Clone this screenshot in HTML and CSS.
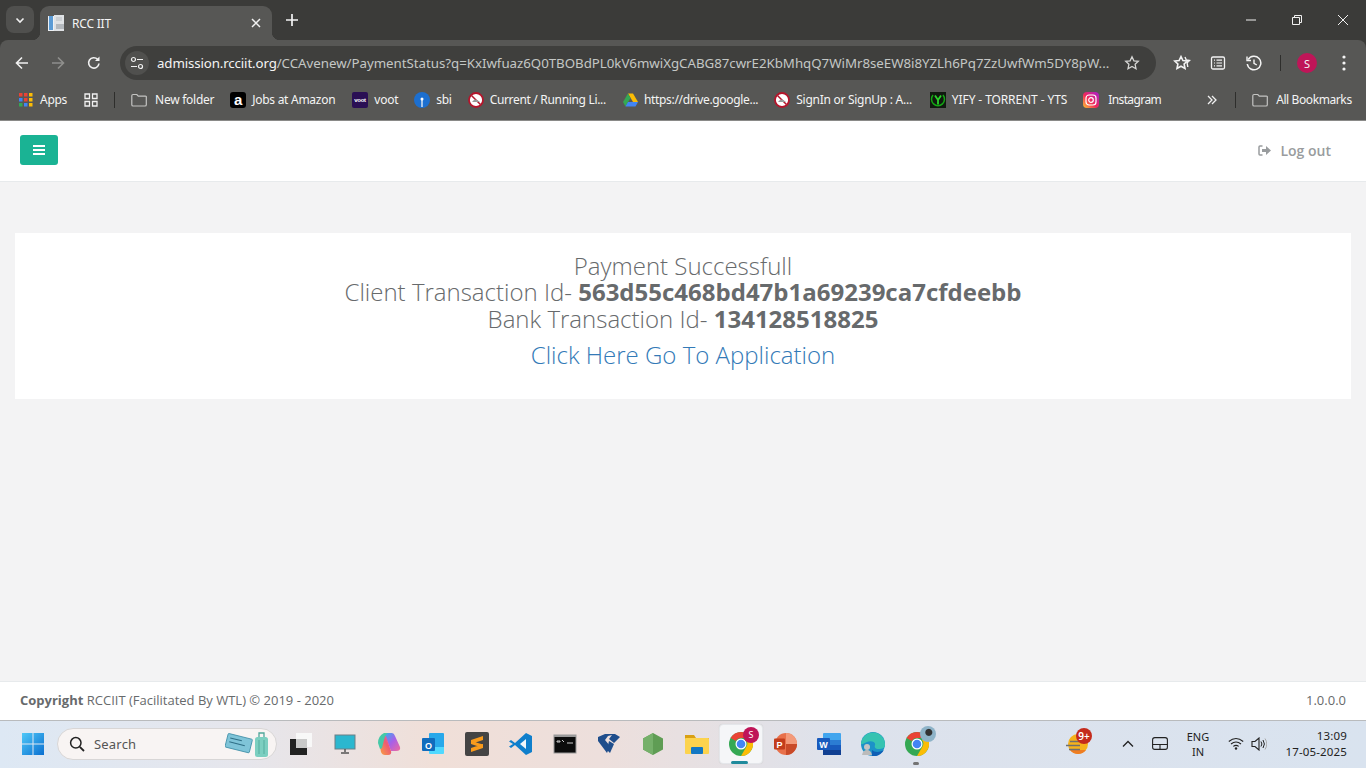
FILE: index.html
```html
<!DOCTYPE html>
<html lang="en">
<head>
<meta charset="utf-8">
<title>RCC IIT</title>
<link rel="stylesheet" href="styles.css">
</head>
<body>
<header class="browser">
  <div class="tabstrip">
    <div class="tab-search"><svg width="12" height="12" viewBox="0 0 12 12"><path d="M2.500 4.500 6 8l3.500-3.500" fill="none" stroke="#f1f1f1" stroke-width="1.600"/></svg></div>
    <div class="tab">
      <svg class="favicon" width="16" height="16" viewBox="0 0 16 16"><rect x="0" y="1" width="11" height="15" fill="#eef1f4"/><rect x="1" y="1" width="4" height="14" fill="#5b9bd5"/><rect x="6" y="0" width="10" height="16" fill="#dfe2e5"/><path d="M8 3h6M8 5h6" stroke="#b8bdc2"/><rect x="8" y="9" width="8" height="5" fill="#b4b9be"/></svg>
      <span class="tab-title">RCC IIT</span>
      <svg class="tab-close" width="12" height="12" viewBox="0 0 12 12"><path d="M2 2l8 8M10 2l-8 8" stroke="#f1f1f1" stroke-width="1.500"/></svg>
    </div>
    <svg class="new-tab" width="14" height="14" viewBox="0 0 14 14"><path d="M7 1v12M1 7h12" stroke="#f4f4f4" stroke-width="1.700"/></svg>
    <div class="win-controls">
      <svg width="12" height="12" viewBox="0 0 12 12"><path d="M1 6h10" stroke="#f1f1f1"/></svg>
      <svg width="12" height="12" viewBox="0 0 12 12"><path d="M1.500 3.500h7v7h-7zM3.500 3.500v-2h7v7h-2" fill="none" stroke="#f1f1f1"/></svg>
      <svg width="12" height="12" viewBox="0 0 12 12"><path d="M1 1l10 10M11 1 1 11" stroke="#f1f1f1"/></svg>
    </div>
  </div>
  <div class="toolbar">
    <svg class="tb-back" width="16" height="16" viewBox="0 0 16 16"><path d="M14 8H2.500M8 2.500 2.500 8 8 13.500" fill="none" stroke="#f1f1f1" stroke-width="1.600"/></svg>
    <svg class="tb-fwd" width="16" height="16" viewBox="0 0 16 16"><path d="M2 8h11.500M8 2.500 13.500 8 8 13.500" fill="none" stroke="#8f8f8d" stroke-width="1.600"/></svg>
    <svg class="tb-reload" width="16" height="16" viewBox="0 0 16 16"><path d="M13 8.500A5.200 5.200 0 1 1 11.600 4.300" fill="none" stroke="#f1f1f1" stroke-width="1.600"/><path d="M13.500 1.500v4.600H9z" fill="#f1f1f1"/></svg>
    <div class="omnibox">
      <div class="site-chip"><svg width="14" height="14" viewBox="0 0 14 14"><circle cx="3.500" cy="3.500" r="2" fill="none" stroke="#f1f1f1" stroke-width="1.200"/><path d="M7 3.500h6M1 10.500h6" stroke="#f1f1f1" stroke-width="1.200"/><circle cx="10.500" cy="10.500" r="2" fill="none" stroke="#f1f1f1" stroke-width="1.200"/></svg></div>
      <div class="url"><span class="url-host">admission.rcciit.org</span><span class="url-path">/CCAvenew/PaymentStatus?q=KxIwfuaz6Q0TBOBdPL0kV6mwiXgCABG87cwrE2KbMhqQ7WiMr8seEW8i8YZLh6Pq7ZzUwfWm5DY8pW...</span></div>
      <svg class="omni-star" width="16" height="16" viewBox="0 0 16 16"><path d="m8 1.800 1.900 4 4.400.5-3.200 3 .9 4.400L8 11.500l-4 2.200.9-4.400-3.200-3 4.400-.5z" fill="none" stroke="#d6d6d4" stroke-width="1.300"/></svg>
    </div>
    <svg class="tb-ico tb-stars" width="18" height="18" viewBox="0 0 18 18"><path d="m8 2.500 1.900 4 4.400.5-3.200 3 .9 4.400L8 12.200l-4 2.200.9-4.400L1.700 7l4.400-.5z" fill="none" stroke="#f4f4f4" stroke-width="1.600"/><path d="m12 3 1.300 3 3.200.5-2.400 2.300.7 4.200" fill="none" stroke="#f4f4f4" stroke-width="1.400"/></svg>
    <svg class="tb-ico tb-list" width="16" height="16" viewBox="0 0 16 16"><rect x="1.500" y="2" width="13" height="12" rx="1.500" fill="none" stroke="#f4f4f4" stroke-width="1.300"/><path d="M6.500 5.200h5.500M6.500 8h5.500M6.500 10.800h5.500M4 5.200h1M4 8h1M4 10.800h1" stroke="#f4f4f4" stroke-width="1.200"/></svg>
    <svg class="tb-ico tb-hist" width="16" height="16" viewBox="0 0 16 16"><path d="M2.200 4.500A6.800 6.800 0 1 1 1.300 9" fill="none" stroke="#f4f4f4" stroke-width="1.500"/><path d="M1 1.500v4h4" fill="none" stroke="#f4f4f4" stroke-width="1.400"/><path d="M8 4.500V8.300l2.800 1.700" fill="none" stroke="#f4f4f4" stroke-width="1.400"/></svg>
    <span class="tb-sep"></span>
    <span class="avatar">S</span>
    <svg class="tb-ico tb-more" width="4" height="16" viewBox="0 0 4 16"><circle cx="2" cy="2" r="1.600" fill="#f4f4f4"/><circle cx="2" cy="8" r="1.600" fill="#f4f4f4"/><circle cx="2" cy="14" r="1.600" fill="#f4f4f4"/></svg>
  </div>
  <nav class="bookmarks">
    <a class="bm bm-apps"><svg width="14" height="14" viewBox="0 0 14 14"><g><rect x="0" y="0" width="3.500" height="3.500" fill="#ea4335"/><rect x="5" y="0" width="3.500" height="3.500" fill="#ea4335"/><rect x="10" y="0" width="3.500" height="3.500" fill="#fbbc05"/><rect x="0" y="5" width="3.500" height="3.500" fill="#4285f4"/><rect x="5" y="5" width="3.500" height="3.500" fill="#ea4335"/><rect x="10" y="5" width="3.500" height="3.500" fill="#fbbc05"/><rect x="0" y="10" width="3.500" height="3.500" fill="#34a853"/><rect x="5" y="10" width="3.500" height="3.500" fill="#4285f4"/><rect x="10" y="10" width="3.500" height="3.500" fill="#fbbc05"/></g></svg><span>Apps</span></a>
    <svg class="bm-grid" width="14" height="14" viewBox="0 0 14 14"><path d="M1 1h4.500v4.500H1zM8.500 1H13v4.500H8.500zM1 8.500h4.500V13H1zM8.500 8.500H13V13H8.500z" fill="none" stroke="#f1f1f1" stroke-width="1.300"/></svg>
    <span class="bm-sep bm-sep-a"></span>
    <a class="bm bm-folder"><svg width="16" height="14" viewBox="0 0 16 14"><path d="M.8 2.800q0-1.300 1.300-1.300h3.700l1.500 1.600h7q1.300 0 1 1.300v7.300q0 1.300-1.300 1.300h-11.900q-1.300 0-1.300-1.300z" fill="none" stroke="#c4c4c2" stroke-width="1.200"/></svg><span>New folder</span></a>
    <a class="bm"><svg width="16" height="16" viewBox="0 0 16 16"><rect width="16" height="16" rx="3" fill="#000"/><text class="ico-a" x="8" y="13" text-anchor="middle">a</text></svg><span>Jobs at Amazon</span></a>
    <a class="bm bm-voot"><svg width="16" height="16" viewBox="0 0 16 16"><rect width="16" height="16" rx="2" fill="#2a0f54"/><text class="ico-voot" x="8" y="10" text-anchor="middle">voot</text></svg><span>voot</span></a>
    <a class="bm"><svg width="16" height="16" viewBox="0 0 16 16"><circle cx="8" cy="8" r="8" fill="#1c6fd0"/><circle cx="8" cy="7" r="1.500" fill="#fff"/><path d="M8 8v7" stroke="#fff" stroke-width="1.200"/></svg><span>sbi</span></a>
    <a class="bm bm-current"><svg width="16" height="16" viewBox="0 0 16 16"><circle cx="8" cy="8" r="7" fill="#fff" stroke="#b4152b" stroke-width="1.800"/><path d="M3.500 3.500l9 9" stroke="#b4152b" stroke-width="1.500"/><path d="M4 10q3-5 8 0z" fill="#999"/></svg><span>Current / Running Li...</span></a>
    <a class="bm bm-drive"><svg width="15" height="14" viewBox="0 0 15 14"><path d="M5 .5h5L15 9h-5z" fill="#fbbc04"/><path d="M5 .5 0 9l2.500 4.500L7.500 5z" fill="#34a853"/><path d="M2.500 13.500h10L15 9H5z" fill="#4285f4"/></svg><span>https://drive.google...</span></a>
    <a class="bm"><svg width="16" height="16" viewBox="0 0 16 16"><circle cx="8" cy="8" r="7" fill="#fff" stroke="#b4152b" stroke-width="1.800"/><path d="M3.500 3.500l9 9" stroke="#b4152b" stroke-width="1.500"/><path d="M4 10q3-5 8 0z" fill="#999"/></svg><span>SignIn or SignUp : A...</span></a>
    <a class="bm bm-yify"><svg width="16" height="16" viewBox="0 0 16 16"><rect width="16" height="16" fill="#10190f"/><path d="M3 3a6.500 6.500 0 1 0 10 0" fill="none" stroke="#14a814" stroke-width="1.500"/><path d="M5 3.500 8 8l3-4.500M8 8v4.500" fill="none" stroke="#2bd42b" stroke-width="1.800"/></svg><span>YIFY - TORRENT - YTS</span></a>
    <a class="bm bm-insta"><svg width="16" height="16" viewBox="0 0 16 16"><defs><linearGradient id="ig" x1="0" y1="1" x2="1" y2="0"><stop offset="0" stop-color="#fdc830"/><stop offset=".45" stop-color="#f0285a"/><stop offset="1" stop-color="#a51fd0"/></linearGradient></defs><rect width="16" height="16" rx="4" fill="url(#ig)"/><rect x="3" y="3" width="10" height="10" rx="3" fill="none" stroke="#fff" stroke-width="1.200"/><circle cx="8" cy="8" r="2.300" fill="none" stroke="#fff" stroke-width="1.200"/></svg><span>Instagram</span></a>
    <svg class="bm-more" width="10" height="10" viewBox="0 0 10 10"><path d="M1 1l4 4-4 4M5 1l4 4-4 4" fill="none" stroke="#f1f1f1" stroke-width="1.300"/></svg>
    <span class="bm-sep bm-sep-b"></span>
    <a class="bm bm-all"><svg width="16" height="14" viewBox="0 0 16 14"><path d="M.8 2.800q0-1.300 1.300-1.300h3.700l1.500 1.600h7q1.300 0 1 1.300v7.300q0 1.300-1.300 1.300h-11.900q-1.300 0-1.300-1.300z" fill="none" stroke="#c4c4c2" stroke-width="1.200"/></svg><span>All Bookmarks</span></a>
  </nav>
</header>

<main class="page">
  <div class="topnav">
    <button class="menu-btn" aria-label="Menu"><svg width="12" height="10" viewBox="0 0 12 10"><path d="M0 0h12v2H0zM0 4h12v2H0zM0 8h12v2H0z" fill="#fff"/></svg></button>
    <a class="logout"><svg width="13" height="11" viewBox="0 0 13 11"><path d="M4.500 1H2Q1 1 1 2v7q0 1 1 1h2.500" fill="none" stroke="#999c9e" stroke-width="1.500"/><path d="M4 4h4V1l5 4.500L8 10V7H4z" fill="#999c9e"/></svg><span>Log out</span></a>
  </div>
  <div class="content">
    <section class="card">
      <h2 class="status">Payment Successfull<br>Client Transaction Id- <b>563d55c468bd47b1a69239ca7cfdeebb</b><br>Bank Transaction Id- <b>134128518825</b></h2>
      <a class="app-link">Click Here Go To Application</a>
    </section>
  </div>
  <footer class="footer">
    <span><b>Copyright</b> RCCIIT (Facilitated By WTL) © 2019 - 2020</span>
    <span>1.0.0.0</span>
  </footer>
</main>

<div class="taskbar">
  <div class="start"><svg width="24" height="24" viewBox="0 0 24 24"><defs><linearGradient id="win" x1="0" y1="0" x2="1" y2="1"><stop offset="0" stop-color="#4fc8f8"/><stop offset="1" stop-color="#0a6fd0"/></linearGradient></defs><path d="M1 1h10.500v10.500H1zM12.500 1H23v10.500H12.500zM1 12.500h10.500V23H1zM12.500 12.500H23V23H12.500z" fill="url(#win)"/></svg></div>
  <div class="search">
    <svg width="16" height="16" viewBox="0 0 16 16"><circle cx="6.800" cy="6.800" r="5.200" fill="none" stroke="#222" stroke-width="1.500"/><path d="m10.800 10.800 4.200 4.200" stroke="#222" stroke-width="1.800"/></svg>
    <span class="search-text">Search</span>
    <svg class="search-art" width="44" height="28" viewBox="0 0 44 28"><g transform="rotate(14 13 14)"><rect x="1" y="6" width="25" height="14" rx="1" fill="#7fc4d8" stroke="#3f8ea6" stroke-width=".8"/><path d="M4 10h12M4 14h16" stroke="#2f6f86"/></g><rect x="30" y="7" width="13" height="20" rx="2.500" fill="#7ccfc0"/><path d="M34 7V3h5v4" fill="none" stroke="#4fa69a" stroke-width="1.300"/><path d="M34 10v14M39 10v14" stroke="#54ad9f"/></svg>
  </div>
  <div class="apps">
    <span class="app"><svg width="24" height="24" viewBox="0 0 24 24"><rect x="7" y="1" width="16" height="14" fill="#f8f8f8"/><rect x="1" y="7" width="17" height="16" fill="#222"/><rect x="7" y="7" width="11" height="9" fill="#c9c9c9"/></svg></span>
    <span class="app"><svg width="24" height="24" viewBox="0 0 24 24"><rect x="2" y="3" width="20" height="14" fill="#2bb7cf" stroke="#6d7f86"/><path d="M12 17v3M8 21h8" stroke="#555" stroke-width="1.500"/></svg></span>
    <span class="app"><svg width="24" height="24" viewBox="0 0 24 24"><defs><linearGradient id="cop1" x1="0" y1="0" x2="1" y2="1"><stop offset="0" stop-color="#2fb4f0"/><stop offset=".5" stop-color="#a860e8"/><stop offset="1" stop-color="#f06a9c"/></linearGradient><linearGradient id="cop2" x1="0" y1="1" x2="1" y2="0"><stop offset="0" stop-color="#f9a83a"/><stop offset=".6" stop-color="#ee5c72"/><stop offset="1" stop-color="#d860d8"/></linearGradient></defs><path d="M7 1h8q2 0 3 3l5 11q1 4-4 4h-5z" fill="url(#cop1)"/><path d="M2 9q0-4 4-5h3l5 15q1 4-3 4H8q-3 0-4-3z" fill="url(#cop2)"/><path d="M1 11q0-7 6-10h4q-3 2-4 7l-2 8-2 1z" fill="#46c9a8"/></svg></span>
    <span class="app"><svg width="24" height="24" viewBox="0 0 24 24"><rect x="8" y="1" width="15" height="15" rx="1" fill="#28a8ea"/><path d="M8 15h15v6q0 1-1 1H9q-1 0-1-1z" fill="#50d9ff"/><rect x="1" y="6" width="13" height="13" rx="1" fill="#0f6cbd"/><text class="ico-o" x="7.500" y="16.500" text-anchor="middle">O</text></svg></span>
    <span class="app"><svg width="24" height="24" viewBox="0 0 24 24"><rect width="24" height="24" rx="2" fill="#444"/><path d="M6 8 18 4v4L6 12zM6 9l12 3.500v3.500L6 12zM6 16l12-4v4L6 20z" fill="#f99b1c"/></svg></span>
    <span class="app"><svg width="24" height="24" viewBox="0 0 24 24"><path d="M17 1 23 4v16l-6 3L6 13l-4 3-2-1.500L4 12 0 9.500 2 8l4 3z" fill="#0f7fcc"/><path d="M17 7v10l-6-5z" fill="#f0f6fa"/></svg></span>
    <span class="app"><svg width="24" height="20" viewBox="0 0 24 20"><rect x="1" y="1" width="22" height="18" fill="#0c0c0c" stroke="#999"/><rect x="1" y="1" width="22" height="2" fill="#9a9a9a"/><path d="M4 7h3v1H4zM9 6l2 2M14 9h6" stroke="#ccc"/></svg></span>
    <span class="app"><svg width="24" height="24" viewBox="0 0 24 24"><path d="M1 5 8 2h10l5 3-6 6-5-4 3-4-4 1-3 4 5 6-3 7-6-8-3-4z" fill="#1f4e8c"/><path d="M12 9l5 3-4 9-3-3z" fill="#1f4e8c"/></svg></span>
    <span class="app"><svg width="22" height="24" viewBox="0 0 22 24"><path d="M11 1 21 6.500v11L11 23 1 17.500v-11z" fill="#5f9d54"/><path d="M11 1v22L1 17.500v-11z" fill="#75b06a"/></svg></span>
    <span class="app"><svg width="24" height="24" viewBox="0 0 24 24"><path d="M0 3h9l2 3h13v2H0z" fill="#d9a013"/><rect y="6" width="24" height="16" rx="1" fill="#fcd34d"/><rect x="6" y="15" width="12" height="7" rx="1" fill="#1278c4"/></svg></span>
    <span class="app app-active"><svg class="chrome" width="24" height="24" viewBox="0 0 24 24"><circle cx="12" cy="12" r="12" fill="#34a853"/><path d="M12 0a12 12 0 0 1 10.400 6H12a6 6 0 0 0-5.200 3L1.600 6A12 12 0 0 1 12 0z" fill="#ea4335"/><path d="M22.400 6A12 12 0 0 1 12 24l5.200-9A6 6 0 0 0 17 8z" fill="#fbbc05"/><circle cx="12" cy="12" r="5.500" fill="#fff"/><circle cx="12" cy="12" r="4.300" fill="#4285f4"/></svg><span class="app-badge">S</span><span class="app-underline"></span></span>
    <span class="app"><svg width="24" height="24" viewBox="0 0 24 24"><circle cx="13" cy="12" r="11" fill="#e8704a"/><path d="M13 1a11 11 0 0 1 11 11H13z" fill="#f39a7a"/><path d="M13 12h11a11 11 0 0 1-11 11z" fill="#c94a28"/><rect x="1" y="6.500" width="11" height="11" rx="1" fill="#c33c1b"/><text class="ico-o" x="6.500" y="15.500" text-anchor="middle">P</text></svg></span>
    <span class="app"><svg width="24" height="24" viewBox="0 0 24 24"><rect x="6" y="1" width="18" height="22" rx="1" fill="#41a5ee"/><rect x="6" y="8" width="18" height="5" fill="#2b7cd3"/><rect x="6" y="13" width="18" height="5" fill="#185abd"/><rect x="6" y="18" width="18" height="5" fill="#103f91"/><rect x="0" y="6" width="13" height="12" rx="1" fill="#185abd"/><text class="ico-o" x="6.500" y="15.500" text-anchor="middle">W</text></svg></span>
    <span class="app"><svg width="24" height="24" viewBox="0 0 24 24"><circle cx="12" cy="12" r="12" fill="#1c92c8"/><path d="M0 12a12 12 0 0 1 24 1c0 3-3 4-6 4-3 0-5-1-4-4 1-3-4-5-8-3-3 1-5 3-6 2z" fill="#36c3b1"/><path d="M11 24c4 1 9-1 12-6-3 2-9 3-12 0z" fill="#0f5fb5"/><circle cx="6" cy="15" r="3" fill="#c4c4c4"/><path d="M1 23q1-5 5-5t5 5z" fill="#bbb"/></svg></span>
    <span class="app"><svg class="chrome" width="24" height="24" viewBox="0 0 24 24"><circle cx="12" cy="12" r="12" fill="#34a853"/><path d="M12 0a12 12 0 0 1 10.400 6H12a6 6 0 0 0-5.200 3L1.600 6A12 12 0 0 1 12 0z" fill="#ea4335"/><path d="M22.400 6A12 12 0 0 1 12 24l5.200-9A6 6 0 0 0 17 8z" fill="#fbbc05"/><circle cx="12" cy="12" r="5.500" fill="#fff"/><circle cx="12" cy="12" r="4.300" fill="#4285f4"/></svg><span class="app-photo"></span><span class="app-dot"></span></span>
  </div>
  <div class="tray">
    <span class="weather"><svg width="24" height="24" viewBox="0 0 24 24"><circle cx="13" cy="12" r="10" fill="#f6b21b"/><path d="M13 22a10 10 0 0 0 8-4H5a10 10 0 0 0 8 4z" fill="#ef7d22"/><path d="M5 9.500h13M1 13.500h14M4 17.500h11" stroke="#6f6f6f" stroke-width="1.600"/></svg><span class="weather-badge">9+</span></span>
    <svg class="tray-chev" width="12" height="8" viewBox="0 0 12 8"><path d="M1 6.500 6 1.500l5 5" fill="none" stroke="#222" stroke-width="1.300"/></svg>
    <svg class="tray-pad" width="16" height="13" viewBox="0 0 16 13"><rect x=".6" y=".6" width="14.800" height="11.800" rx="2.200" fill="none" stroke="#222" stroke-width="1.100"/><path d="M.6 7.500h14.800M8 7.500v5" stroke="#222" stroke-width="1.100"/></svg>
    <span class="lang">ENG<br>IN</span>
    <svg class="tray-wifi" width="16" height="13" viewBox="0 0 16 13"><path d="M.8 4.500q7.200-6 14.400 0M3 7q5-4 10 0M5.300 9.400q2.700-2 5.400 0" fill="none" stroke="#222" stroke-width="1.100"/><circle cx="8" cy="11.500" r="1.200" fill="#222"/></svg>
    <svg class="tray-vol" width="16" height="14" viewBox="0 0 16 14"><path d="M1 4.500h3L8 1v12L4 9.500H1z" fill="none" stroke="#222" stroke-width="1.100"/><path d="M10 4.500q1.800 2.500 0 5M12 3q2.800 4 0 8" fill="none" stroke="#222"/><path d="M14 1.500q3.600 5.500 0 11" fill="none" stroke="#aaa"/></svg>
    <span class="clock">13:09<br>17-05-2025</span>
  </div>
</div>
</body>
</html>
```

FILE: styles.css
```css
* { box-sizing: border-box; }
html, body { margin: 0; padding: 0; height: 100%; }
body { width: 1366px; height: 768px; overflow: hidden; display: flex; flex-direction: column; font-family: "Open Sans", sans-serif; background: #f3f3f4; }
svg { display: block; flex: none; }

/* browser chrome */
.browser { height: 121px; flex: none; background: #3b3b39; font-family: "Noto Sans", "Open Sans", sans-serif; color: #f4f4f4; }
.tabstrip { height: 40px; display: flex; align-items: flex-end; position: relative; }
.tab-search { width: 28px; height: 27px; margin: 0 6px 7px 6px; background: #50504e; border-radius: 8px; display: flex; align-items: center; justify-content: center; }
.tab { width: 232px; height: 34px; background: #575755; border-radius: 9px 9px 0 0; display: flex; align-items: center; padding: 0 0 0 8px; position: relative; }
.tab::before, .tab::after { content: ""; position: absolute; bottom: 0; width: 8px; height: 8px; }
.tab::before { left: -8px; background: radial-gradient(circle at 0 0, transparent 8px, #575755 8.500px); }
.tab::after { right: -8px; background: radial-gradient(circle at 100% 0, transparent 8px, #575755 8.500px); }
.tab-title { margin-left: 8px; font-size: 12px; width: 172px; letter-spacing: -.2px; }
.tab-close { margin-left: 6px; }
.new-tab { margin: 0 0 13px 13px; }
.win-controls { margin-left: auto; margin-bottom: 14px; padding-right: 17px; display: flex; gap: 34px; }
.toolbar { height: 40px; background: #575755; border-radius: 8px 8px 0 0; display: flex; align-items: flex-start; position: relative; }
.tb-back { margin: 15px 0 0 14px; }
.tb-fwd { margin: 15px 0 0 20px; }
.tb-reload { margin: 15px 0 0 20px; }
.omnibox { width: 1036px; height: 34px; margin: 6px 0 0 18px; background: #3f3f3d; border-radius: 17px; display: flex; align-items: center; padding-left: 5px; }
.site-chip { width: 24px; height: 24px; border-radius: 50%; background: #50504e; display: flex; align-items: center; justify-content: center; flex: none; }
.url { margin-left: 8px; width: 954px; font-size: 13.300px; white-space: nowrap; overflow: hidden; color: #c4c7c5; letter-spacing: -.13px; line-height: 18px; }
.url-host { color: #f4f4f4; }
.url-path { letter-spacing: -.03px; }
.omni-star { margin-left: 13px; }
.tb-ico { margin-top: 15px; }
.tb-stars { margin-left: 17px; margin-top: 14px; }
.tb-list { margin-left: 19px; }
.tb-hist { margin-left: 20px; }
.tb-sep { width: 1px; height: 16px; background: #2e2e2c; margin: 15px 0 0 18px; }
.avatar { width: 20px; height: 20px; border-radius: 50%; background: #bf1558; color: #f4f4f4; font-size: 11px; display: flex; align-items: center; justify-content: center; margin: 13px 0 0 16px; }
.tb-more { margin-left: 25px; }
.bookmarks { height: 41px; background: #575755; border-bottom: 1px solid #8a8a88; display: flex; align-items: center; font-size: 12px; padding-bottom: 1px; }
.bm { display: flex; align-items: center; gap: 6px; margin-left: 16px; white-space: nowrap; letter-spacing: -.27px; }
.bm-apps { margin-left: 19px; gap: 7px; }
.bm-grid { margin-left: 17px; }
.bm-sep { width: 1px; height: 16px; background: #2e2e2c; }
.bm-sep-a { margin-left: 16px; }
.bm-folder { margin-left: 16px; gap: 8px; }
.bm-voot { margin-left: 17px; }
.bm-current { letter-spacing: -.32px; }
.bm-drive { margin-left: 17px; gap: 6px; letter-spacing: -.32px; }
.bm-yify { margin-left: 18px; letter-spacing: -.1px; }
.bm-insta { gap: 9px; letter-spacing: -.6px; }
.bm-more { margin-left: 46px; }
.bm-sep-b { margin-left: 18px; }
.bm-all { gap: 8px; letter-spacing: -.4px; }
.ico-a { font: 700 15px "Liberation Sans", sans-serif; fill: #fff; }
.ico-voot { font: 700 6px "Liberation Sans", sans-serif; fill: #fff; }
.ico-o { font: 700 9px "Liberation Sans", sans-serif; fill: #fff; }

/* page */
.page { flex: 1; display: flex; flex-direction: column; background: #f3f3f4; color: #676a6c; min-height: 0; }
.topnav { height: 61px; flex: none; background: #fff; border-bottom: 1px solid #e7eaec; display: flex; justify-content: space-between; align-items: flex-start; padding: 14px 35px 0 20px; }
.menu-btn { width: 38px; height: 30px; background: #1ab394; border: 0; border-radius: 3px; padding: 0; display: flex; align-items: center; justify-content: center; }
.logout { display: flex; align-items: center; gap: 9px; font-size: 14px; font-weight: 600; color: #999c9e; height: 30px; }
.content { flex: 1; padding: 51px 15px 0; }
.card { background: #fff; height: 166px; padding: 20px 15px 0; text-align: center; }
.status { margin: 0; font-size: 24px; font-weight: 300; line-height: 26.400px; color: #676a6c; }
.status b { font-weight: 700; }
.app-link { display: block; margin-top: 10px; font-size: 24px; font-weight: 300; line-height: 26.400px; color: #337ab7; }
.footer { height: 39px; flex: none; background: #fff; border-top: 1px solid #e7eaec; display: flex; justify-content: space-between; align-items: center; padding: 0 20px 2px; font-size: 13px; color: #676a6c; }

/* taskbar */
.taskbar { height: 48px; flex: none; display: flex; align-items: center; position: relative; border-top: 1px solid #b9bbbd; padding-bottom: 2px; background: linear-gradient(90deg, #dde8f4 0, #e6e6ec 18%, #f0dfd8 32%, #eddfdc 44%, #dde2ec 62%, #d9e3ef 100%); font-family: "Noto Sans", "Open Sans", sans-serif; color: #222; }
.start { width: 24px; margin-left: 21px; }
.search { width: 220px; height: 32px; margin-left: 12px; background: #f8f4f3; border: 1px solid #d8d6d6; border-radius: 16px; display: flex; align-items: center; padding-left: 11px; font-size: 13px; color: #555; }
.search-text { margin-left: 9px; letter-spacing: .2px; }
.search-art { margin-left: auto; margin-right: 7px; }
.apps { display: flex; margin-left: 2px; }
.app { width: 44px; height: 40px; display: flex; align-items: center; justify-content: center; position: relative; }
.app-active { background: #f5f6f8; border-radius: 4px; border: 1px solid #e4e6ea; box-shadow: 0 0 1px #ccc; }
.app-badge { position: absolute; right: 3px; top: 2px; width: 16px; height: 16px; border-radius: 50%; background: #bf1558; color: #fff; font-size: 9px; display: flex; align-items: center; justify-content: center; }
.app-underline { position: absolute; left: 11px; bottom: -1px; width: 17px; height: 3px; border-radius: 2px; background: #1f8a9c; }
.app-photo { position: absolute; right: 3px; top: 2px; width: 16px; height: 16px; border-radius: 50%; background: radial-gradient(circle at 55% 40%, #333 0 3px, #8eb3c8 4px); }
.app-dot { position: absolute; left: 18px; bottom: -1px; width: 6px; height: 3px; border-radius: 2px; background: #737373; }
.tray { flex: 1; position: relative; height: 100%; display: flex; align-items: center; font-size: 11px; }
.weather { position: relative; margin-left: 126px; }
.weather-badge { position: absolute; left: 11px; top: -4px; width: 16px; height: 16px; border-radius: 50%; background: #c42b1c; color: #fff; font-size: 10px; font-weight: 600; display: flex; align-items: center; justify-content: center; }
.tray-chev { margin-left: 33px; }
.tray-pad { margin-left: 18px; }
.lang { margin-left: 17px; width: 26px; text-align: center; line-height: 15px; font-size: 11px; }
.tray-wifi { margin-left: 17px; }
.tray-vol { margin-left: 7px; }
.clock { margin-left: auto; margin-right: 19px; text-align: right; line-height: 16px; font-size: 11.500px; letter-spacing: .15px; }
```
